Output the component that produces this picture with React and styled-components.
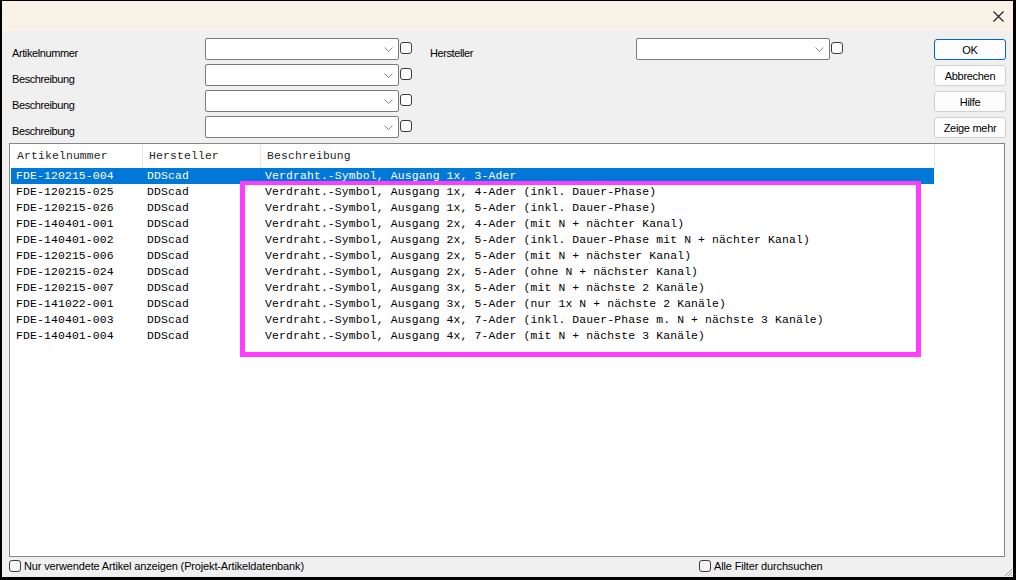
import React from "react";
import styled, { createGlobalStyle } from "styled-components";

const GlobalStyle = createGlobalStyle`
  html, body {
    margin: 0;
    padding: 0;
    background: #000;
  }
  #root {
    width: 1016px;
    height: 580px;
    box-sizing: border-box;
    padding: 1px 3px 3px 2px;
  }
`;

const rows = [
  ["FDE-120215-004", "DDScad", "Verdraht.-Symbol, Ausgang 1x, 3-Ader"],
  ["FDE-120215-025", "DDScad", "Verdraht.-Symbol, Ausgang 1x, 4-Ader (inkl. Dauer-Phase)"],
  ["FDE-120215-026", "DDScad", "Verdraht.-Symbol, Ausgang 1x, 5-Ader (inkl. Dauer-Phase)"],
  ["FDE-140401-001", "DDScad", "Verdraht.-Symbol, Ausgang 2x, 4-Ader (mit N + nächter Kanal)"],
  ["FDE-140401-002", "DDScad", "Verdraht.-Symbol, Ausgang 2x, 5-Ader (inkl. Dauer-Phase mit N + nächter Kanal)"],
  ["FDE-120215-006", "DDScad", "Verdraht.-Symbol, Ausgang 2x, 5-Ader (mit N + nächster Kanal)"],
  ["FDE-120215-024", "DDScad", "Verdraht.-Symbol, Ausgang 2x, 5-Ader (ohne N + nächster Kanal)"],
  ["FDE-120215-007", "DDScad", "Verdraht.-Symbol, Ausgang 3x, 5-Ader (mit N + nächste 2 Kanäle)"],
  ["FDE-141022-001", "DDScad", "Verdraht.-Symbol, Ausgang 3x, 5-Ader (nur 1x N + nächste 2 Kanäle)"],
  ["FDE-140401-003", "DDScad", "Verdraht.-Symbol, Ausgang 4x, 7-Ader (inkl. Dauer-Phase m. N + nächste 3 Kanäle)"],
  ["FDE-140401-004", "DDScad", "Verdraht.-Symbol, Ausgang 4x, 7-Ader (mit N + nächste 3 Kanäle)"],
];

function Combo() {
  return (
    <FieldCell>
      <ComboBox>
        <svg width="9" height="5" viewBox="0 0 9 5">
          <path d="M0.5 0.5 L4.5 4.5 L8.5 0.5" fill="none" stroke="#8a8a8a" strokeWidth="1" />
        </svg>
      </ComboBox>
      <Check />
    </FieldCell>
  );
}

export default function App() {
  return (
    <>
      <GlobalStyle />
      <Window>
        <TitleBar>
          <svg width="11" height="11" viewBox="0 0 11 11">
            <path d="M0.5 0.5 L10.5 10.5 M10.5 0.5 L0.5 10.5" stroke="#1b1b1b" strokeWidth="1.1" />
          </svg>
        </TitleBar>

        <TopArea>
          <Filters>
            <Label>Artikelnummer</Label>
            <Combo />
            <Label $indent>Hersteller</Label>
            <Combo />
            <Label>Beschreibung</Label>
            <Combo />
            <Spacer />
            <Label>Beschreibung</Label>
            <Combo />
            <Spacer />
            <Label>Beschreibung</Label>
            <Combo />
            <Spacer />
          </Filters>
          <Buttons>
            <Button $primary>OK</Button>
            <Button>Abbrechen</Button>
            <Button>Hilfe</Button>
            <Button>Zeige mehr</Button>
          </Buttons>
        </TopArea>

        <ListPanel>
          <HeaderRow>
            <HeadCell $w={133} $pad={7}>Artikelnummer</HeadCell>
            <HeadCell $w={118} $pad={6}>Hersteller</HeadCell>
            <HeadCell $w={674} $pad={6}>Beschreibung</HeadCell>
          </HeaderRow>
          {rows.map((r, i) => (
            <Row key={r[0]} $selected={i === 0}>
              <Cell $w={132} $pad={5}>{r[0]}</Cell>
              <Cell $w={118} $pad={4}>{r[1]}</Cell>
              <Cell $w={674} $pad={4}>{r[2]}</Cell>
            </Row>
          ))}
          <Highlight />
        </ListPanel>

        <Footer>
          <FooterItem>
            <Check $round />
            <span>Nur verwendete Artikel anzeigen (Projekt-Artikeldatenbank)</span>
          </FooterItem>
          <FooterItem>
            <Check $round />
            <span>Alle Filter durchsuchen</span>
          </FooterItem>
        </Footer>

        <Grip>
          <svg width="9" height="9" viewBox="0 0 9 9">
            <path d="M8 1 L1 8 M8 4 L4 8 M8 7 L7 8" stroke="#a0a0a0" strokeWidth="1" />
          </svg>
        </Grip>
      </Window>
    </>
  );
}

const Window = styled.div`
  position: relative;
  width: 100%;
  height: 100%;
  display: flex;
  flex-direction: column;
  background: #f0f0f0;
  font-family: "Liberation Sans", Arial, sans-serif;
  font-size: 11px;
  letter-spacing: -0.4px;
  color: #000;
  overflow: hidden;
`;

const TitleBar = styled.div`
  height: 30px;
  flex: none;
  background: #faf2e8;
  display: flex;
  align-items: center;
  justify-content: flex-end;
  padding-right: 9px;
`;

const TopArea = styled.div`
  display: flex;
  padding: 7px 7px 0 10px;
  height: 100px;
  flex: none;
`;

const Filters = styled.div`
  display: grid;
  grid-template-columns: 193px 207px 224px 209px;
  grid-auto-rows: 22px;
  row-gap: 4px;
`;

const Spacer = styled.div`
  grid-column: span 2;
`;

const Label = styled.div`
  padding-top: 8px;
  padding-left: ${(p) => (p.$indent ? "18px" : "0")};
  line-height: 14px;
  white-space: nowrap;
`;

const FieldCell = styled.div`
  display: flex;
  align-items: flex-start;
  gap: 1px;
`;

const ComboBox = styled.div`
  width: 194px;
  height: 22px;
  box-sizing: border-box;
  background: #fff;
  border: 1px solid #7a7a7a;
  border-radius: 2px;
  display: flex;
  align-items: center;
  justify-content: flex-end;
  padding-right: 5px;
`;

const Check = styled.div`
  width: 12px;
  height: 12px;
  box-sizing: border-box;
  flex: none;
  margin-top: ${(p) => (p.$round ? "0" : "4px")};
  border: 1px solid #3c3c3c;
  border-radius: 3px;
  background: ${(p) => (p.$round ? "#f5f5f5" : "#fdfdfd")};
`;

const Buttons = styled.div`
  margin-left: auto;
  padding-top: 1px;
  display: flex;
  flex-direction: column;
  gap: 5px;
`;

const Button = styled.div`
  width: 72px;
  height: 21px;
  box-sizing: border-box;
  display: flex;
  align-items: center;
  justify-content: center;
  background: #fdfdfd;
  border: 1px solid ${(p) => (p.$primary ? "#0067c0" : "#d0d0d0")};
  border-radius: 3px;
  letter-spacing: -0.3px;
`;

const ListPanel = styled.div`
  position: relative;
  margin: 5px 8px 0 7px;
  height: 414px;
  flex: none;
  box-sizing: border-box;
  background: #fff;
  border: 1px solid #828790;
  font-family: "Liberation Mono", "Courier New", monospace;
  font-size: 11.4px;
  letter-spacing: 0.15px;
`;

const HeaderRow = styled.div`
  display: flex;
  height: 24px;
  color: #262626;
`;

const HeadCell = styled.div`
  width: ${(p) => p.$w}px;
  box-sizing: border-box;
  padding-left: ${(p) => p.$pad}px;
  border-right: 1px solid #e5e5e5;
  line-height: 24px;
  white-space: nowrap;
`;

const Row = styled.div`
  display: flex;
  margin-left: 1px;
  width: 923px;
  height: 16px;
  background: ${(p) => (p.$selected ? "#0078d7" : "transparent")};
  color: ${(p) => (p.$selected ? "#fff" : "#000")};
`;

const Cell = styled.div`
  width: ${(p) => p.$w}px;
  flex: none;
  box-sizing: border-box;
  padding: 1px 0 0 ${(p) => p.$pad}px;
  line-height: 15px;
  white-space: nowrap;
  overflow: hidden;
`;

const Highlight = styled.div`
  position: absolute;
  left: 230px;
  top: 37px;
  width: 681px;
  height: 176px;
  box-sizing: border-box;
  border: 5px solid #ff3cff;
  border-top-width: 4px;
  pointer-events: none;
`;

const Footer = styled.div`
  display: grid;
  grid-template-columns: 690px auto;
  align-items: center;
  height: 16px;
  padding: 1px 0 0 7px;
  letter-spacing: -0.15px;
`;

const FooterItem = styled.div`
  display: flex;
  align-items: center;
  gap: 3px;
  white-space: nowrap;
`;

const Grip = styled.div`
  position: absolute;
  right: 0;
  bottom: 0;
  width: 9px;
  height: 9px;
  display: flex;
`;
